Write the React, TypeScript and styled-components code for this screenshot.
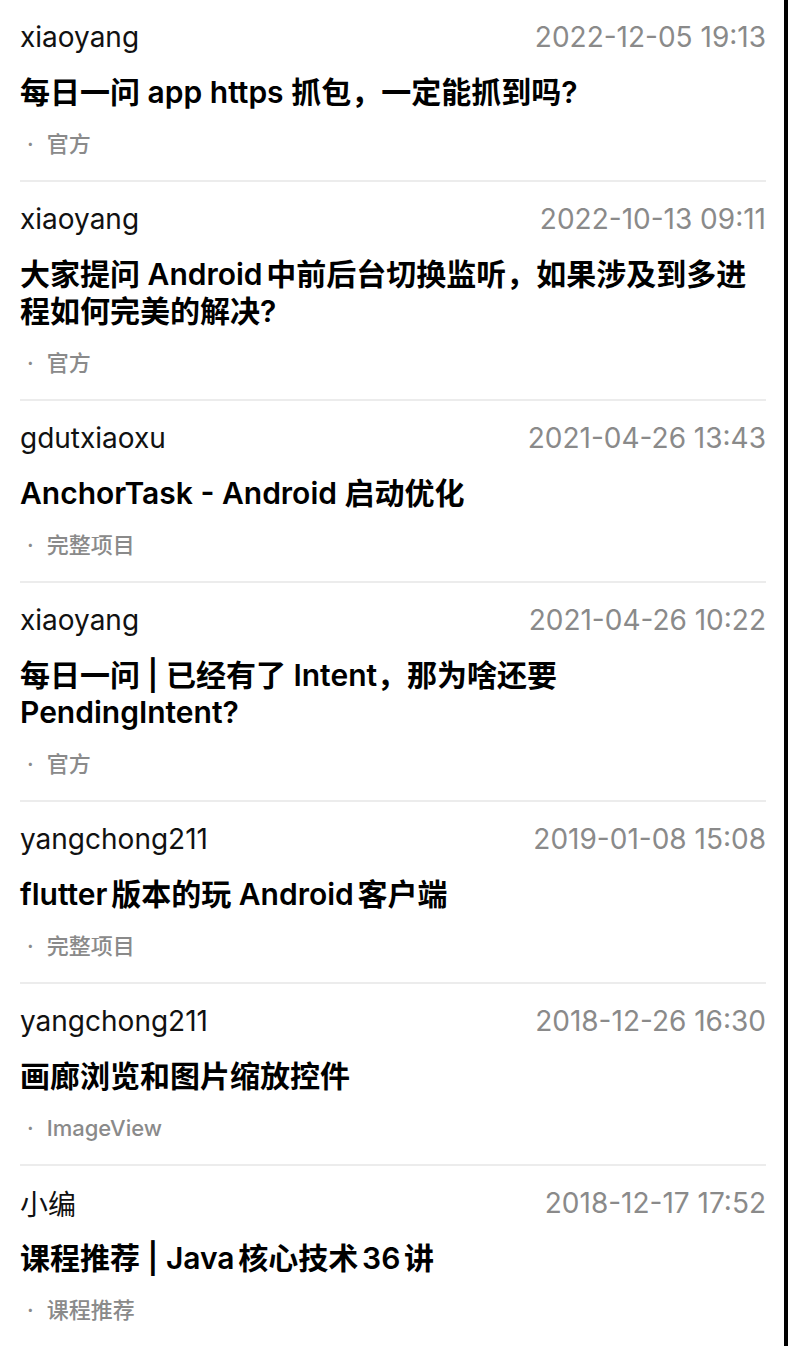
import React from "react";
import styled, { createGlobalStyle } from "styled-components";

const Global = createGlobalStyle`
  html, body { margin: 0; padding: 0; background: #fff; }
  body { font-family: "Inter", "Noto Sans CJK SC", sans-serif; -webkit-font-smoothing: antialiased; }
`;

const Page = styled.div`
  box-sizing: border-box;
  width: 788px;
  height: 1346px;
  overflow: hidden;
  border-right: 4px solid #000;
  padding: 0 18px 0 20px;
  background: #fff;
`;

const List = styled.div`
  display: flex;
  flex-direction: column;
`;

const Item = styled.article`
  display: flex;
  flex-direction: column;
  padding: 19px 0 21px;
  border-bottom: 2px solid #ececec;
`;

const Meta = styled.div`
  display: flex;
  justify-content: space-between;
  align-items: center;
  height: 36px;
  font-size: 28px;
`;

const Author = styled.span`
  color: #111;
`;

const Time = styled.span`
  color: #8a8a8a;
`;

const Title = styled.h2`
  margin: 19px 0 0;
  font-size: 30px;
  line-height: 37px;
  font-weight: 600;
  color: #000;
  text-autospace: normal;
`;

const Tag = styled.div`
  margin-top: 18px;
  height: 30px;
  line-height: 30px;
  font-size: 22px;
  font-weight: 500;
  color: #8a8a8a;
`;

const Dot = styled.span`
  margin: 0 13px 0 7px;
`;

type Post = { author: string; time: string; title: string; tag: string };

const posts: Post[] = [
  { author: "xiaoyang", time: "2022-12-05 19:13", title: "每日一问 app https 抓包，一定能抓到吗?", tag: "官方" },
  { author: "xiaoyang", time: "2022-10-13 09:11", title: "大家提问 Android中前后台切换监听，如果涉及到多进程如何完美的解决?", tag: "官方" },
  { author: "gdutxiaoxu", time: "2021-04-26 13:43", title: "AnchorTask - Android 启动优化", tag: "完整项目" },
  { author: "xiaoyang", time: "2021-04-26 10:22", title: "每日一问 | 已经有了 Intent，那为啥还要 PendingIntent?", tag: "官方" },
  { author: "yangchong211", time: "2019-01-08 15:08", title: "flutter版本的玩 Android客户端", tag: "完整项目" },
  { author: "yangchong211", time: "2018-12-26 16:30", title: "画廊浏览和图片缩放控件", tag: "ImageView" },
  { author: "小编", time: "2018-12-17 17:52", title: "课程推荐 | Java核心技术36讲", tag: "课程推荐" },
];

export default function App() {
  return (
    <>
      <Global />
      <Page>
        <List>
          {posts.map((p, i) => (
            <Item key={i}>
              <Meta>
                <Author>{p.author}</Author>
                <Time>{p.time}</Time>
              </Meta>
              <Title>{p.title}</Title>
              <Tag>
                <Dot>·</Dot>
                {p.tag}
              </Tag>
            </Item>
          ))}
        </List>
      </Page>
    </>
  );
}
